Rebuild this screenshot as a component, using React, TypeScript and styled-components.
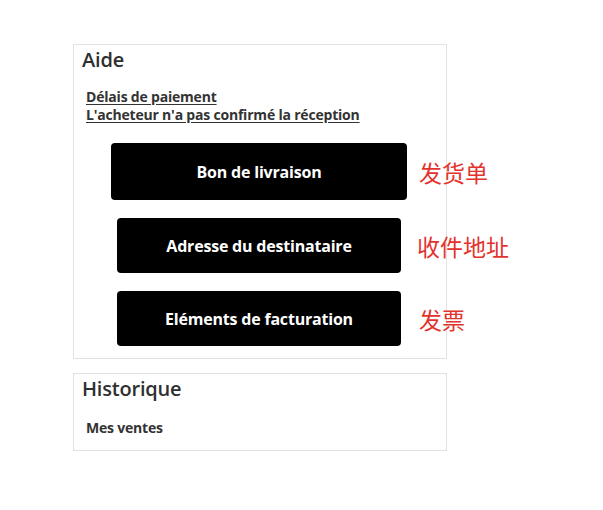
import React from 'react';
import styled, { createGlobalStyle } from 'styled-components';

const GlobalStyle = createGlobalStyle`
    body {
        margin: 0;
        background: #ffffff;
        font-family: "Open Sans", "Liberation Sans", sans-serif;
        color: #333333;
    }
`;

const Page = styled.div`
    padding: 44px 0 0 73px;
    display: flex;
    flex-direction: column;
    gap: 14px;
`;

const Panel = styled.section<{ $bottom: number }>`
    width: 374px;
    border: 1px solid #e2e2e2;
    padding: 3px 8px ${p => p.$bottom}px 8px;
    box-sizing: border-box;
`;

const Title = styled.h2`
    margin: 0;
    font-size: 20px;
    line-height: 24px;
    font-weight: 600;
    color: #2f2f2f;
    letter-spacing: -0.2px;
`;

const LinkList = styled.div<{ $top: number }>`
    display: flex;
    flex-direction: column;
    margin: ${p => p.$top}px 0 0 4px;
`;

const Link = styled.a<{ $underline?: boolean }>`
    font-size: 14px;
    line-height: 18px;
    font-weight: 700;
    color: #333333;
    text-decoration: ${p => (p.$underline ? 'underline' : 'none')};
    text-underline-offset: 2px;
    letter-spacing: -0.2px;
    cursor: pointer;
`;

const ButtonList = styled.div`
    display: flex;
    flex-direction: column;
    gap: 18px;
    margin-top: 19px;
`;

const Row = styled.div<{ $indent: number }>`
    display: flex;
    align-items: center;
    padding-left: ${p => p.$indent}px;
`;

const ActionButton = styled.button<{ $width: number; $height: number }>`
    width: ${p => p.$width}px;
    height: ${p => p.$height}px;
    background: #000000;
    color: #ffffff;
    border: none;
    border-radius: 4px;
    font-family: "Open Sans", "Liberation Sans", sans-serif;
    font-size: 16px;
    font-weight: 700;
    letter-spacing: -0.2px;
    cursor: pointer;
    flex: none;
`;

const Note = styled.span<{ $gap: number }>`
    margin-left: ${p => p.$gap}px;
    font-family: "Noto Sans CJK SC", sans-serif;
    font-size: 23px;
    line-height: 28px;
    color: #e3332d;
    white-space: nowrap;
    flex: none;
`;

const actions = [
    { label: 'Bon de livraison', note: '发货单', indent: 29, width: 296, height: 57, gap: 12 },
    { label: 'Adresse du destinataire', note: '收件地址', indent: 35, width: 284, height: 55, gap: 16 },
    { label: 'Eléments de facturation', note: '发票', indent: 35, width: 284, height: 55, gap: 18 },
];

const App = () => (
    <>
        <GlobalStyle />
        <Page>
            <Panel $bottom={12}>
                <Title>Aide</Title>
                <LinkList $top={16}>
                    <Link $underline>Délais de paiement</Link>
                    <Link $underline>L'acheteur n'a pas confirmé la réception</Link>
                </LinkList>
                <ButtonList>
                    {actions.map(a => (
                        <Row key={a.label} $indent={a.indent}>
                            <ActionButton $width={a.width} $height={a.height}>
                                {a.label}
                            </ActionButton>
                            <Note $gap={a.gap}>{a.note}</Note>
                        </Row>
                    ))}
                </ButtonList>
            </Panel>
            <Panel $bottom={13}>
                <Title>Historique</Title>
                <LinkList $top={18}>
                    <Link>Mes ventes</Link>
                </LinkList>
            </Panel>
        </Page>
    </>
);

export default App;
